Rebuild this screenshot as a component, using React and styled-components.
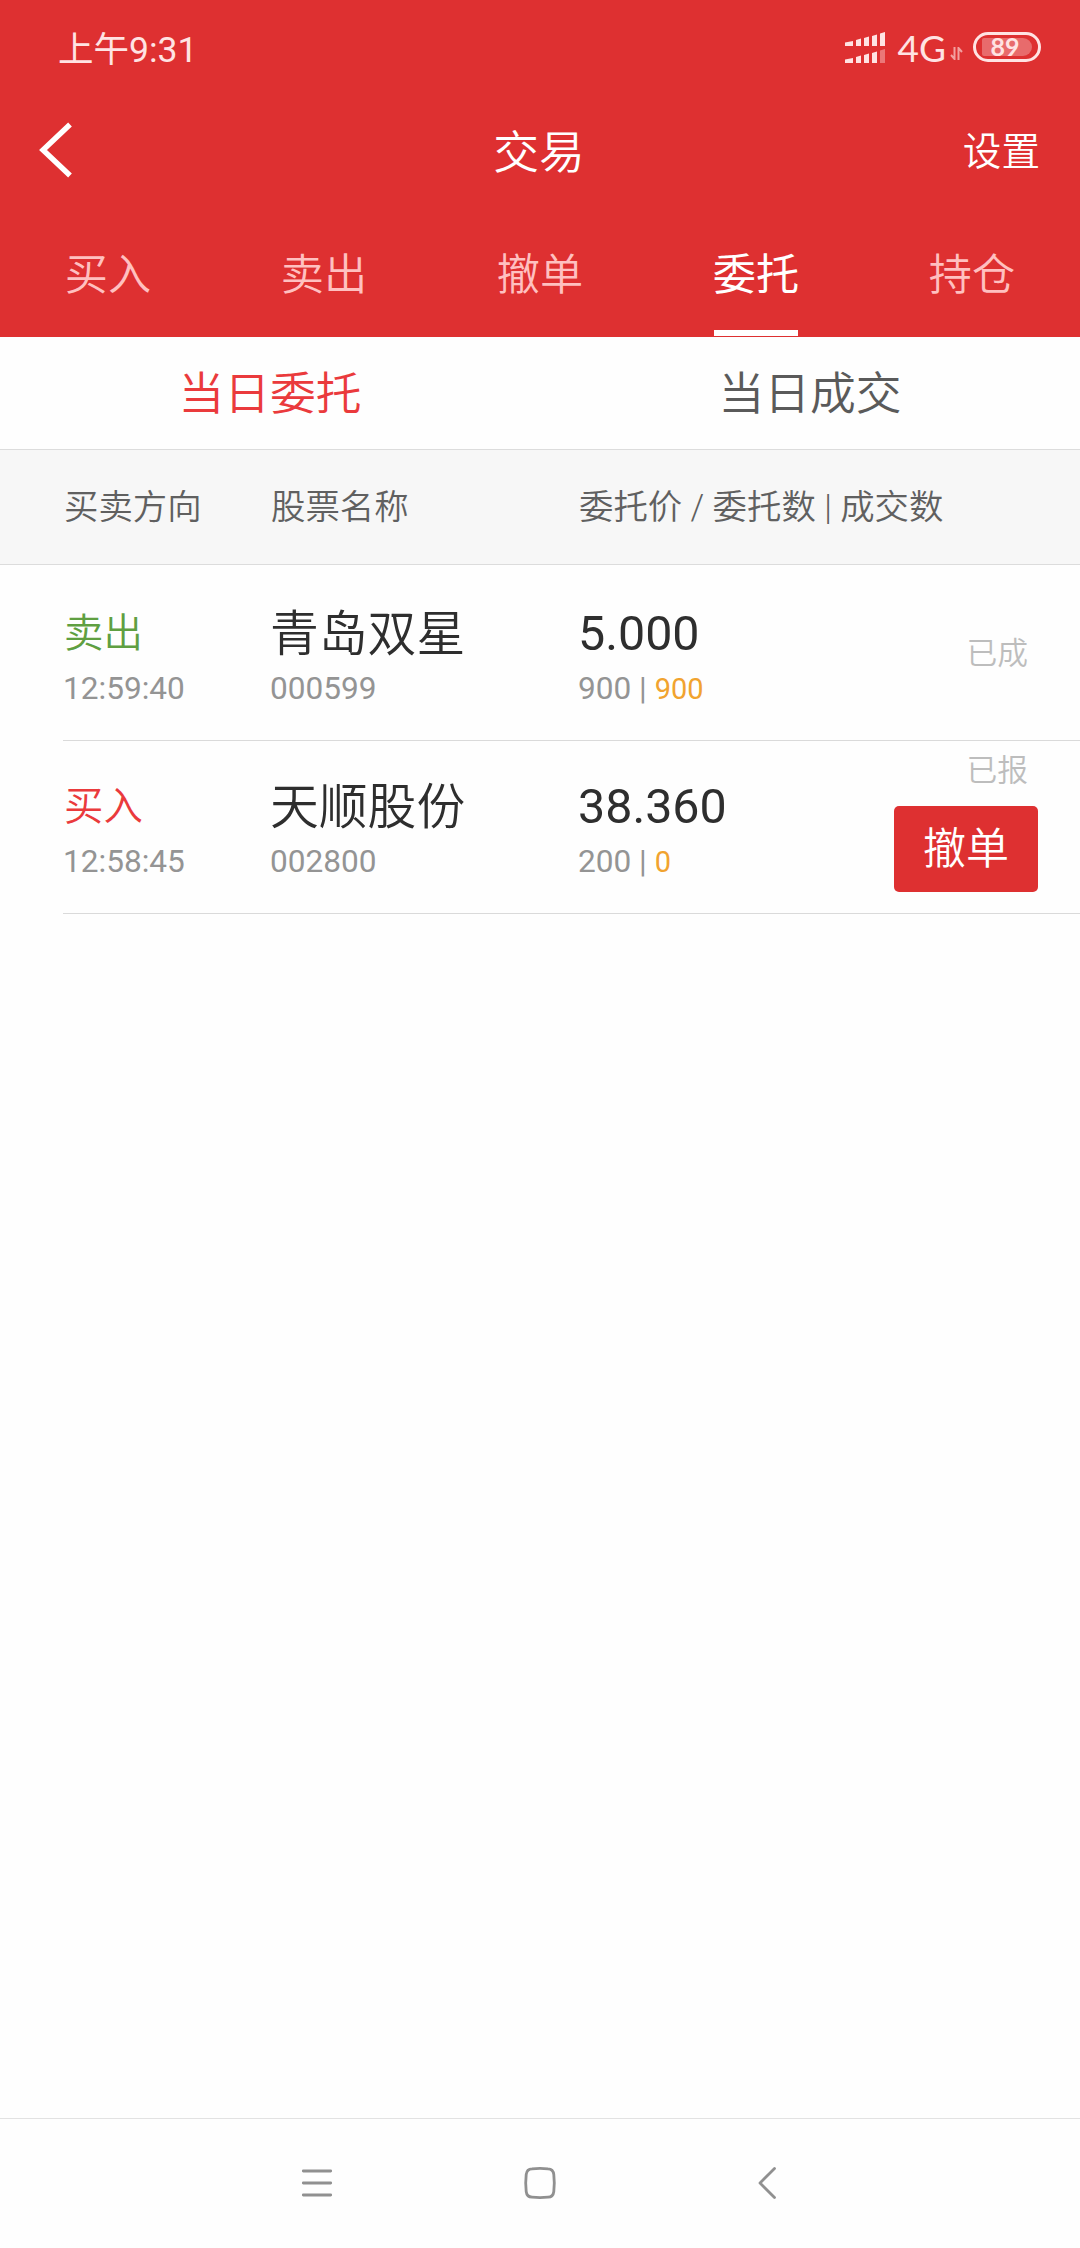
import React, { useState } from "react";
import styled, { createGlobalStyle } from "styled-components";

const tabs = ["买入", "卖出", "撤单", "委托", "持仓"];
const subTabs = ["当日委托", "当日成交"];

const orders = [
  {
    id: 1,
    side: "sell",
    label: "卖出",
    time: "12:59:40",
    name: "青岛双星",
    code: "000599",
    price: "5.000",
    amount: 900,
    filled: 900,
    status: "已成",
    canCancel: false,
  },
  {
    id: 2,
    side: "buy",
    label: "买入",
    time: "12:58:45",
    name: "天顺股份",
    code: "002800",
    price: "38.360",
    amount: 200,
    filled: 0,
    status: "已报",
    canCancel: true,
  },
];

const SignalIcon = () => (
  <svg width="40" height="31" viewBox="0 0 40 31" fill="#ffe3e3">
    <path d="M0 10.5L8 9V14H0ZM11 8L16 6.5V14H11ZM19 6L24 4.5V14H19ZM27 4L32 2.5V14H27ZM35 1.5L40 0V14H35Z" />
    <path d="M0 27.5L8 26V31H0ZM11 25L16 23.5V31H11ZM19 23L24 21.5V31H19ZM27 21L32 19.5V31H27Z" />
    <path d="M35 18.5L40 17V31H35Z" opacity="0.4" />
  </svg>
);

const DataIcon = () => (
  <svg width="13" height="13" viewBox="0 0 13 13" fill="none" stroke="#f2a0a0" strokeWidth="2">
    <path d="M4.5 0V12L1 8M8.5 13V1L12 5" />
  </svg>
);

const BackIcon = () => (
  <svg width="34" height="56" viewBox="0 0 34 56" fill="none" stroke="#fff" strokeWidth="5.4">
    <path d="M32 2.5L5 28L32 53.5" />
  </svg>
);

const App = () => {
  const [tab, setTab] = useState("委托");
  const [subTab, setSubTab] = useState("当日委托");

  return (
    <Page>
      <GlobalStyle />
      <Top>
        <StatusBar>
          <Clock>上午9:31</Clock>
          <StatusRight>
            <SignalIcon />
            <Network>4G</Network>
            <DataArrows>
              <DataIcon />
            </DataArrows>
            <Battery>
              <BatteryLevel>89</BatteryLevel>
            </Battery>
          </StatusRight>
        </StatusBar>
        <TitleBar>
          <BackButton>
            <BackIcon />
          </BackButton>
          <Title>交易</Title>
          <Settings>设置</Settings>
        </TitleBar>
        <Tabs>
          {tabs.map((t) => (
            <Tab key={t} $active={t === tab} onClick={() => setTab(t)}>
              <TabLabel>{t}</TabLabel>
              <Underline $active={t === tab} />
            </Tab>
          ))}
        </Tabs>
      </Top>
      <SubTabs>
        {subTabs.map((t) => (
          <SubTab key={t} $active={t === subTab} onClick={() => setSubTab(t)}>
            {t}
          </SubTab>
        ))}
      </SubTabs>
      <TableHead>
        <span>买卖方向</span>
        <span>股票名称</span>
        <span>委托价 / 委托数 | 成交数</span>
      </TableHead>
      <List>
        {orders.map((o) => (
          <Row key={o.id}>
            <Cell>
              <Side $side={o.side}>{o.label}</Side>
              <Sub>{o.time}</Sub>
            </Cell>
            <Cell>
              <Name>{o.name}</Name>
              <Sub>{o.code}</Sub>
            </Cell>
            <Cell>
              <Price>{o.price}</Price>
              <Sub>
                {o.amount} | <Filled>{o.filled}</Filled>
              </Sub>
            </Cell>
            <Action>
              <Status>{o.status}</Status>
              {o.canCancel && <CancelButton>撤单</CancelButton>}
            </Action>
          </Row>
        ))}
      </List>
      <NavBar>
        <svg width="32" height="34" viewBox="0 0 32 34">
          <path d="M2.3 5H29.7M2.3 17H29.7M2.3 29H29.7" />
        </svg>
        <svg width="34" height="34" viewBox="0 0 34 34">
          <path d="M9 2.8Q17 2 25 2.8Q30.2 3 30.8 8.5Q31.8 17 30.8 25.5Q30.2 31 25 31.2Q17 32 9 31.2Q3.8 31 3.2 25.5Q2.2 17 3.2 8.5Q3.8 3 9 2.8Z" />
        </svg>
        <svg width="20" height="34" viewBox="0 0 20 34">
          <path d="M17.5 2.5L3 17L17.5 31.5" />
        </svg>
      </NavBar>
    </Page>
  );
};

export default App;

const GlobalStyle = createGlobalStyle`
  * {
    box-sizing: border-box;
  }
  body {
    margin: 0;
    background: #fefefe;
    font-family: Roboto, "Noto Sans CJK SC", sans-serif;
    font-weight: 400;
  }
  button {
    border: 0;
    padding: 0;
    background: none;
    font: inherit;
    color: inherit;
  }
`;

const Page = styled.div`
  display: flex;
  flex-direction: column;
  width: 1080px;
  height: 2248px;
  background: #fefefe;
`;

const Top = styled.header`
  height: 337px;
  background: #de3031;
  color: #fff;
`;

const StatusBar = styled.div`
  display: flex;
  justify-content: space-between;
  align-items: center;
  height: 94px;
  padding: 0 39px 0 58px;
  color: #ffe3e3;
`;

const Clock = styled.div`
  padding-top: 5px;
  font-size: 35.5px;
  line-height: 40px;
`;

const StatusRight = styled.div`
  display: flex;
  align-items: center;
`;

const Network = styled.span`
  margin: 0 4px 0 13px;
  padding-top: 2px;
  font-family: Lato, sans-serif;
  font-size: 37px;
  line-height: 40px;
`;

const DataArrows = styled.span`
  display: flex;
  padding-top: 13px;
`;

const Battery = styled.div`
  display: flex;
  justify-content: center;
  align-items: center;
  width: 68px;
  height: 30px;
  margin-left: 10px;
  border: 3px solid #ffe3e3;
  border-radius: 15px;
`;

const BatteryLevel = styled.span`
  width: 50px;
  height: 18px;
  padding-right: 4px;
  border-radius: 2px 9px 9px 2px;
  background: #e86b6c;
  font-family: Lato, sans-serif;
  font-size: 25px;
  line-height: 17px;
  font-weight: 700;
  text-align: center;
`;

const TitleBar = styled.div`
  display: grid;
  grid-template-columns: 1fr auto 1fr;
  align-items: center;
  height: 112px;
  padding: 0 40px 0 38px;
`;

const BackButton = styled.button`
  display: flex;
  height: 56px;
`;

const Title = styled.h1`
  margin: 0;
  padding-top: 7px;
  font-size: 45.8px;
  line-height: 60px;
  font-weight: 350;
`;

const Settings = styled.button`
  justify-self: end;
  padding-top: 4px;
  font-size: 38.6px;
  line-height: 60px;
  font-weight: 350;
`;

const Tabs = styled.nav`
  display: flex;
  height: 131px;
`;

const Tab = styled.button`
  display: flex;
  flex: 1;
  flex-direction: column;
  align-items: center;
  color: ${({ $active }) => ($active ? "#fff" : "#ffc0c0")};
  font-weight: ${({ $active }) => ($active ? 400 : 350)};
`;

const TabLabel = styled.span`
  height: 124px;
  font-size: 43.2px;
  line-height: 140px;
`;

const Underline = styled.span`
  width: 84px;
  height: 6px;
  background: ${({ $active }) => ($active ? "#fff" : "transparent")};
`;

const SubTabs = styled.div`
  display: flex;
  height: 113px;
  border-bottom: 1px solid #dcdcdc;
`;

const SubTab = styled.button`
  flex: 1;
  padding-top: 2px;
  color: ${({ $active }) => ($active ? "#ea3a3c" : "#5a5a5a")};
  font-size: 45.8px;
  line-height: 112px;
  font-weight: 350;
`;

const columns = "207px 308px 1fr";

const TableHead = styled.div`
  display: grid;
  grid-template-columns: ${columns};
  height: 115px;
  padding: 0 0 0 64px;
  border-bottom: 1px solid #dcdcdc;
  background: #f7f7f7;
  color: #606060;
  font-size: 34.4px;
  line-height: 115px;
  font-weight: 350;
`;

const List = styled.div`
  flex: 1;
  padding: 3px 0 0 63px;
`;

const Row = styled.div`
  display: grid;
  grid-template-columns: ${columns} auto;
  height: 173px;
  border-bottom: 1px solid #dadada;
`;

const Cell = styled.div`
  display: flex;
  flex-direction: column;
  padding-top: 36px;
`;

const Side = styled.span`
  height: 60px;
  padding-left: 1px;
  color: ${({ $side }) => ($side === "buy" ? "#ea3a3c" : "#5f9f41")};
  font-size: 39.4px;
  line-height: 60px;
  font-weight: 350;
`;

const Name = styled.span`
  height: 60px;
  color: #2e2e2e;
  font-size: 48.8px;
  line-height: 61px;
  font-weight: 350;
`;

const Price = styled.span`
  height: 60px;
  color: #2e2e2e;
  font-size: 48.4px;
  line-height: 60px;
`;

const Sub = styled.span`
  color: #949494;
  font-size: 31.6px;
  line-height: 50px;
`;

const Filled = styled.span`
  color: #f1a32f;
  font-size: 29px;
`;

const Action = styled.div`
  display: flex;
  flex-direction: column;
  align-items: flex-end;
  justify-content: center;
  padding-right: 42px;
`;

const Status = styled.span`
  padding-right: 10px;
  color: #bdbdbd;
  font-size: 30.8px;
  line-height: 60px;
  font-weight: 350;
`;

const CancelButton = styled.button`
  width: 144px;
  height: 86px;
  margin: 5px 0 21px;
  border-radius: 5px;
  background: #de3031;
  color: #fff;
  font-size: 43px;
  line-height: 83px;
  font-weight: 350;
`;

const NavBar = styled.footer`
  display: flex;
  justify-content: center;
  gap: 190px;
  height: 130px;
  padding: 47px 3px 0 0;
  border-top: 1px solid #e2e2e2;

  svg {
    fill: none;
    stroke: #909090;
    stroke-width: 2.8;
    stroke-linecap: round;
    stroke-linejoin: round;
  }

  svg:last-child {
    margin-left: 10px;
  }
`;
